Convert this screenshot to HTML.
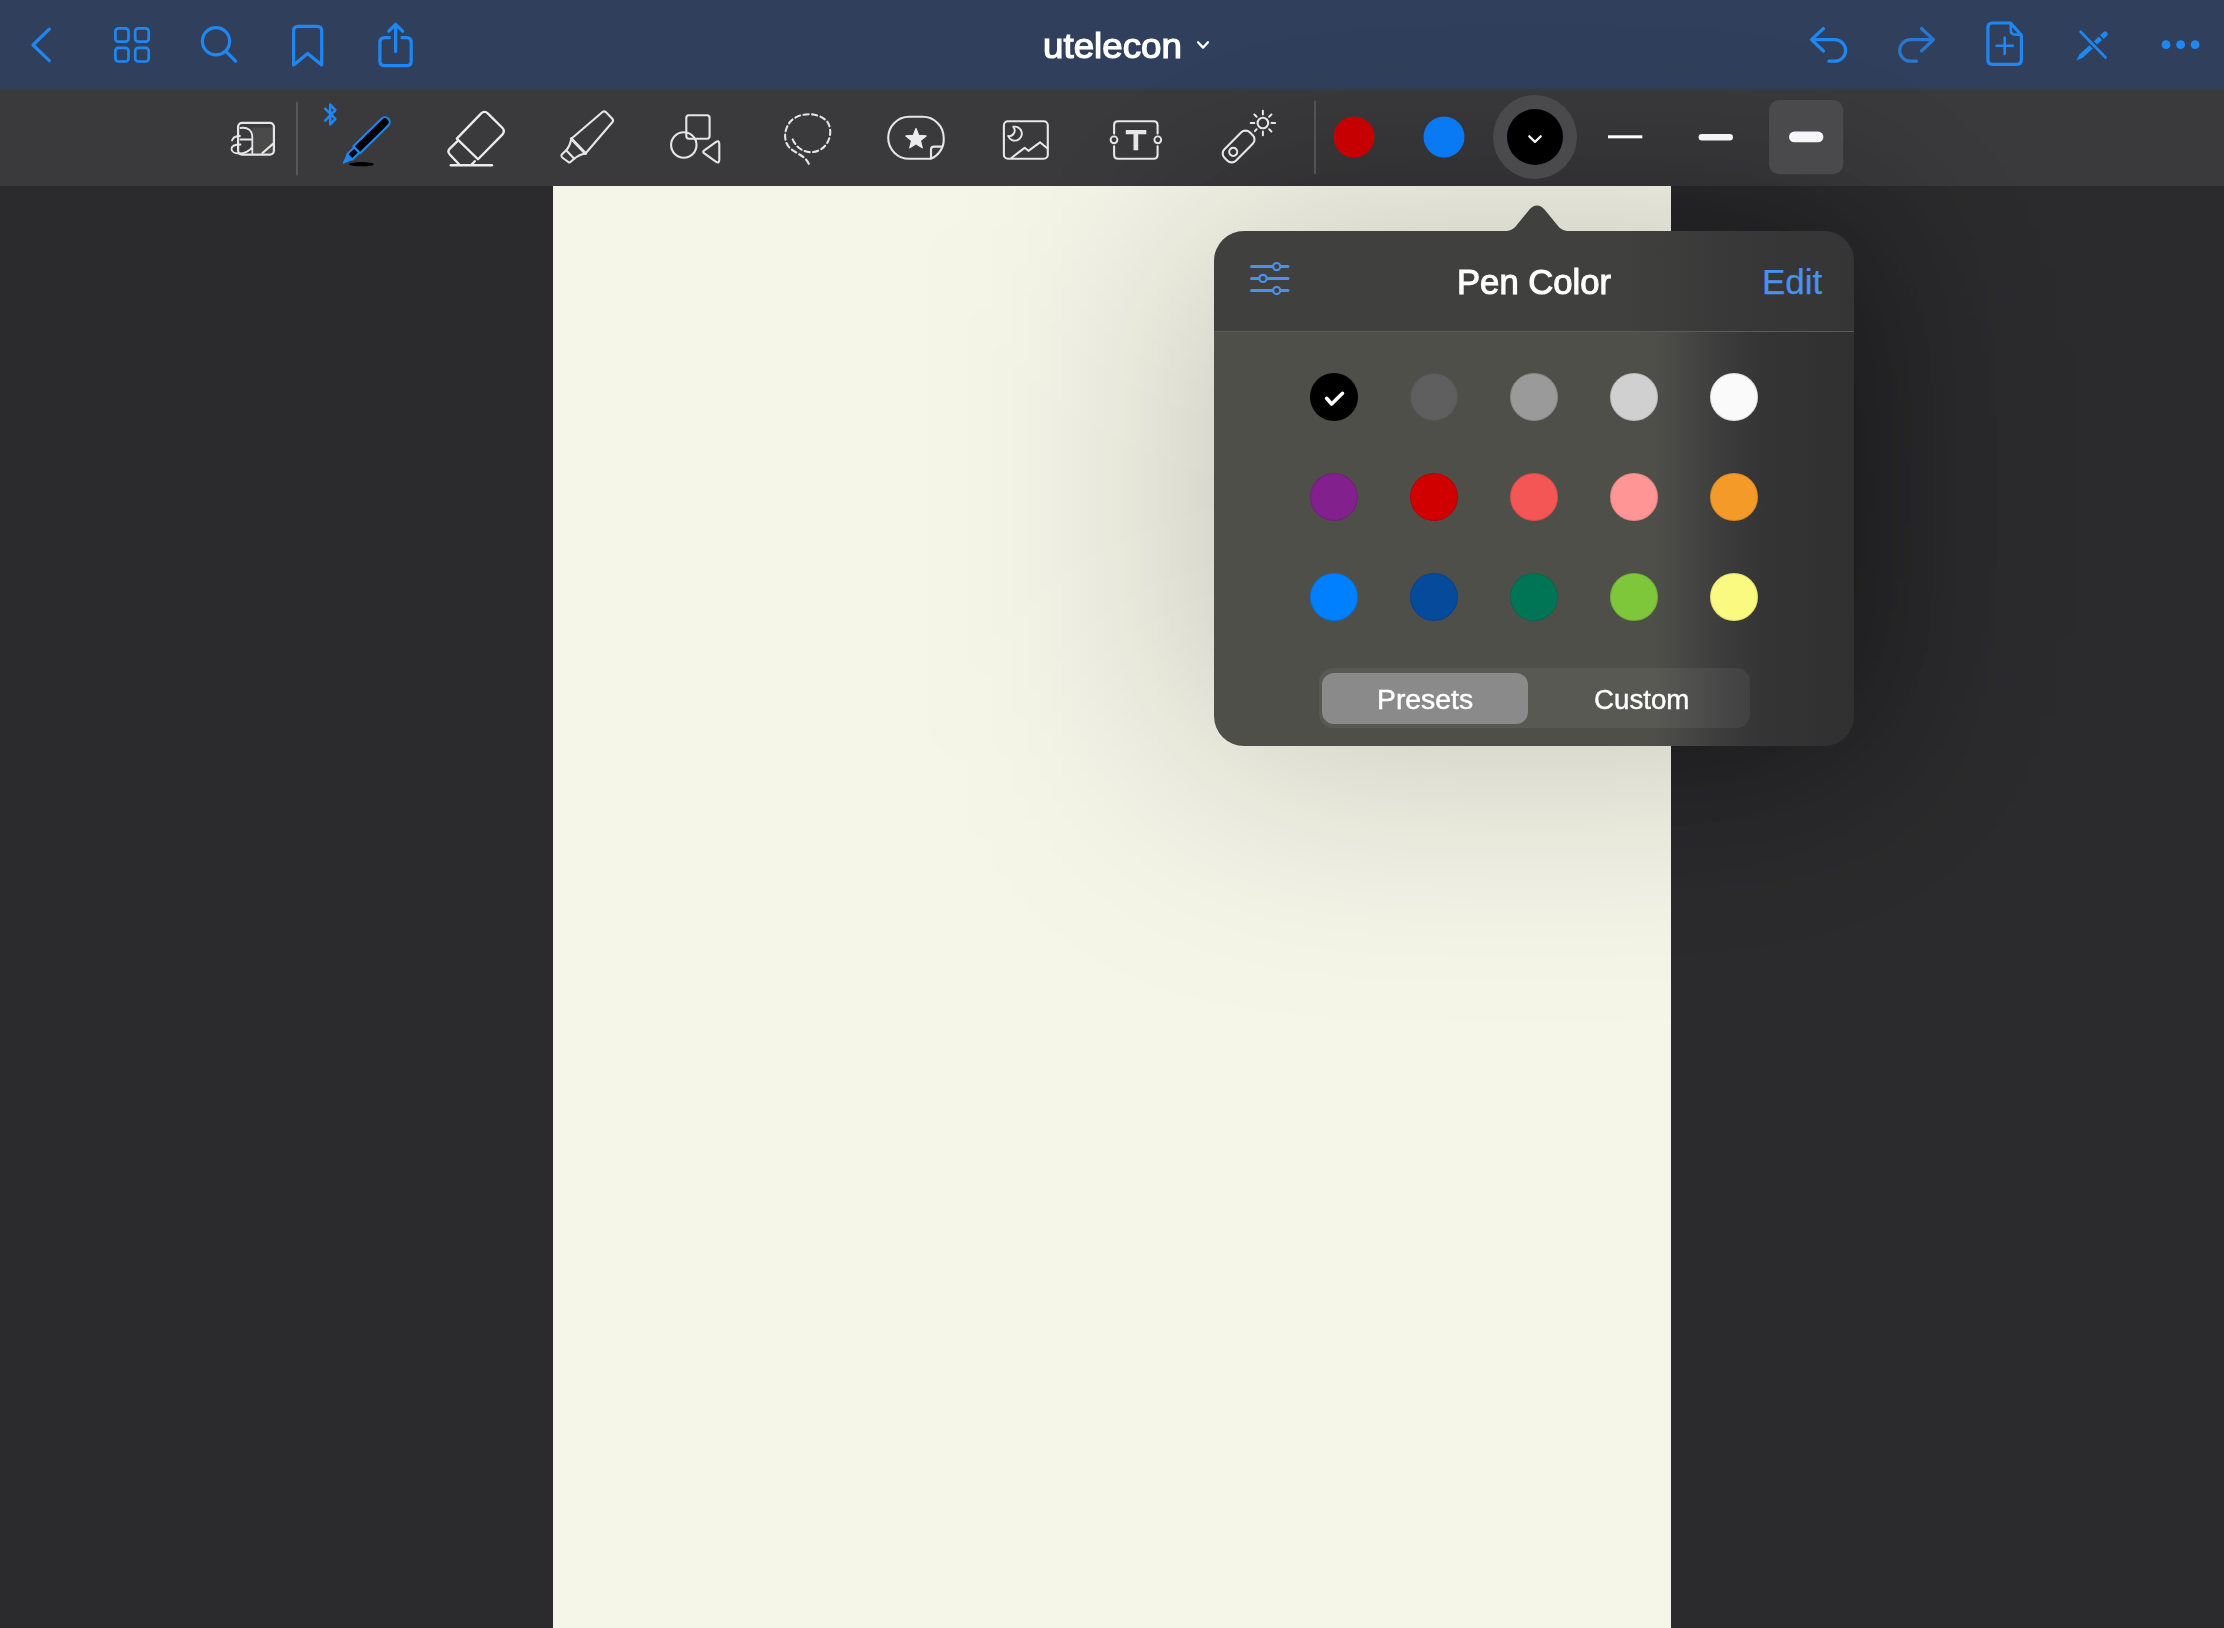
<!DOCTYPE html>
<html><head><meta charset="utf-8">
<style>
*{margin:0;padding:0;box-sizing:border-box}
html,body{width:2224px;height:1628px;overflow:hidden;background:#2b2b2d;font-family:"Liberation Sans",sans-serif}
#nav{position:absolute;left:0;top:0;width:2224px;height:92px;background:linear-gradient(180deg,#30405c 0px,#30405c 87px,#363b48 89.5px,#3a3a3c 92px)}
#tb{position:absolute;left:0;top:92px;width:2224px;height:94px;background:#3a3a3c}
#paper{position:absolute;left:553px;top:186px;width:1118px;height:1442px;background:#f5f5e8;overflow:hidden}
#shadow{position:absolute;left:0;top:0;width:2224px;height:1628px;overflow:hidden;pointer-events:none}
#pop{position:absolute;left:1214px;top:231px;width:640px;height:515px;border-radius:30px;overflow:hidden}
#pophead{position:absolute;left:0;top:0;width:640px;height:100px;background:linear-gradient(90deg,#40403e 0%,#40403e 64%,#373738 84%,#353536 100%)}
#popsep{position:absolute;left:0;top:100px;width:640px;height:1px;background:#5a5a58}
#popbody{position:absolute;left:0;top:101px;width:640px;height:414px;background:linear-gradient(90deg,#4f4f4a 0%,#4f4f4a 68%,#4b4b48 71%,#444443 75%,#3b3b3b 80%,#343435 86%,#303031 100%)}

.t{position:absolute;white-space:nowrap;line-height:1}
.sw{position:absolute;width:48px;height:48px;border-radius:50%;box-shadow:inset 0 0 0 1px rgba(0,0,0,0.10)}
svg{position:absolute;overflow:visible}
</style></head><body>
<div id="nav"></div>
<div id="tb"></div>
<div id="paper"></div>
<svg id="popshadow" width="2224" height="1628" style="position:absolute;left:0;top:0"><defs><filter id="sh" x="-200%" y="-200%" width="500%" height="500%"><feGaussianBlur stdDeviation="125"/></filter></defs><rect x="1189" y="221" width="690" height="540" rx="40" fill="#000" fill-opacity="0.2" filter="url(#sh)"/><defs><clipPath id="rc"><rect x="1671" y="186" width="553" height="1442"/><rect x="0" y="92" width="2224" height="94"/></clipPath></defs><g clip-path="url(#rc)"><rect x="1214" y="231" width="640" height="515" rx="30" fill="#000" fill-opacity="0.36" filter="url(#sh2)"/></g><defs><filter id="sh2" x="-100%" y="-100%" width="300%" height="300%"><feGaussianBlur stdDeviation="85"/></filter></defs></svg>
<div id="pop">
  <div id="pophead"></div>
  <div id="popsep"></div>
  <div id="popbody"></div>
</div>
<svg id="arrow" width="2224" height="1628" style="position:absolute;left:0;top:0"><path d="M1500 231.5 C1509 231.5 1512.5 230 1516 226 L1529.5 209.5 C1534 204 1540 204 1544.5 209.5 L1558 226 C1561.5 230 1565 231.5 1574 231.5 Z" fill="#40403e"/></svg>

<div class="t" style="left:1042.5px;top:27.5px;font-size:35px;color:#fff;-webkit-text-stroke:1.2px #fff;transform:scaleX(1.05);transform-origin:0 0">utelecon</div>
<div class="t" style="left:1457px;top:264px;font-size:35px;color:#fff;-webkit-text-stroke:1.1px #fff;transform:scaleX(0.99);transform-origin:0 0">Pen Color</div>
<div class="t" style="left:1762px;top:264px;font-size:35px;color:#4a90f0;-webkit-text-stroke:0.25px #4a90f0">Edit</div>

<div class="sw" style="left:1310px;top:373px;background:#000"></div>
<div class="sw" style="left:1410px;top:373px;background:#5f5f5f"></div>
<div class="sw" style="left:1510px;top:373px;background:#9a9a9a"></div>
<div class="sw" style="left:1610px;top:373px;background:#d0d0d0"></div>
<div class="sw" style="left:1710px;top:373px;background:#fafafa"></div>
<div class="sw" style="left:1310px;top:473px;background:#82208e"></div>
<div class="sw" style="left:1410px;top:473px;background:#d00000"></div>
<div class="sw" style="left:1510px;top:473px;background:#f45555"></div>
<div class="sw" style="left:1610px;top:473px;background:#ff9595"></div>
<div class="sw" style="left:1710px;top:473px;background:#f39a28"></div>
<div class="sw" style="left:1310px;top:573px;background:#0080ff"></div>
<div class="sw" style="left:1410px;top:573px;background:#064a9c"></div>
<div class="sw" style="left:1510px;top:573px;background:#007556"></div>
<div class="sw" style="left:1610px;top:573px;background:#7ec73b"></div>
<div class="sw" style="left:1710px;top:573px;background:#fafa80"></div>

<div style="position:absolute;left:1319px;top:668px;width:431px;height:60px;border-radius:14px;background:rgba(255,255,255,0.06)"></div>
<div style="position:absolute;left:1322px;top:673px;width:206px;height:51px;border-radius:12px;background:#8a8a8b"></div>
<div class="t" style="left:1377px;top:686.5px;font-size:27px;color:#fff;-webkit-text-stroke:0.45px #fff;transform:scaleX(1.05);transform-origin:0 0">Presets</div>
<div class="t" style="left:1594px;top:686.5px;font-size:27px;color:#fff;-webkit-text-stroke:0.4px #fff;transform:scaleX(1.025);transform-origin:0 0">Custom</div>
<svg id="ic" width="2224" height="1628" viewBox="0 0 2224 1628" style="position:absolute;left:0;top:0" fill="none" stroke-linecap="round" stroke-linejoin="round">
<!-- NAV (blue) -->
<g stroke="#1f87f2" stroke-width="3.2">
  <path d="M49.3 29.2 L33 45 L49.3 60.6"/>
  <g stroke-width="2.7"><rect x="115.4" y="28.3" width="13.1" height="13.4" rx="3"/>
  <rect x="135.2" y="28.3" width="13.5" height="13.4" rx="3"/>
  <rect x="115.4" y="47.8" width="13.1" height="13.7" rx="3"/>
  <rect x="135.2" y="47.8" width="13.5" height="13.7" rx="3"/></g>
  <circle cx="216" cy="41.2" r="13.6"/>
  <path d="M226 51.5 L235.6 61.2"/>
  <path d="M293.6 65 V31 Q293.6 26.3 298.3 26.3 H317 Q321.7 26.3 321.7 31 V65 L307.7 53.5 Z"/>
  <path d="M389.5 37.6 H384.8 Q379.9 37.6 379.9 42.5 V61 Q379.9 65.7 384.8 65.7 H406.4 Q411.2 65.7 411.2 61 V42.5 Q411.2 37.6 406.4 37.6 H402"/>
  <path d="M395.6 51.5 V24.5 M388.8 31.2 L395.6 24.3 L402.6 31.2"/>
  <path d="M1823.5 28.5 L1811.5 39.6 L1823.5 51 M1811.5 39.6 H1834.8 A10.8 10.8 0 0 1 1834.8 61.2 H1829"/>
  <path d="M1996.6 45.8 H2012.8 M2004.7 37.8 V54" stroke-width="2.6"/>
  <path d="M2010.5 23 H1992.5 Q1987.9 23 1987.9 27.6 V59.8 Q1987.9 64.4 1992.5 64.4 H2016.8 Q2021.4 64.4 2021.4 59.8 V35.2 L2010.5 23 Z"/>
  <path d="M2010.8 23.5 V30 Q2010.8 34.6 2015.4 34.6 H2021" stroke-width="2.6"/>

</g>
<g stroke="#2a76cf" stroke-width="3.2"><path d="M1921.5 28.5 L1933.5 39.6 L1921.5 51 M1933.5 39.6 H1910.5 A10.8 10.8 0 0 0 1910.5 61.2 H1916.5"/></g>
<g fill="#1f87f2">
  <g transform="translate(2076.4 60.4) rotate(-42.6)"><path d="M0 0 L6.5 -2.3 H32.8 V2.3 H6.5 Z"/><path d="M34.6 -2.6 H38.9 A2.6 2.6 0 0 1 38.9 2.6 H34.6 Z"/></g>
  <path d="M2080.6 31.8 L2105.4 57.4" stroke="#30405c" stroke-width="6.2" stroke-linecap="butt"/>
  <path d="M2080.6 31.8 L2105.4 57.4" stroke="#1f87f2" stroke-width="2.8" stroke-linecap="round"/>
  <circle cx="2166" cy="44.7" r="4.4"/><circle cx="2180.6" cy="44.7" r="4.4"/><circle cx="2195.1" cy="44.7" r="4.4"/>
</g>

<!-- TOOLBAR (white) -->
<rect x="252.4" y="127.4" width="20.4" height="25.8" fill="#4a4a4b"/>
<g stroke="#e6e6e6" stroke-width="2.2">
  <rect x="238.1" y="122.8" width="35.8" height="31.8" rx="4"/>
  <path d="M262.5 153 L273 143.8"/>
  <path d="M240.5 128 C247.5 126.8 252.3 130 252.3 137.5 V153.5 M240.5 139.5 H252.3 M252.3 147 C249 151.5 244 153.5 239 153.5 C234.5 153.5 231.5 151.5 231.5 149 C231.5 146 234.5 144.5 240.5 144.5 M232 140.5 C232.8 137.5 235.5 136 240 136" stroke-width="1.8"/>
</g>
<path d="M297 102.5 V174.5" stroke="#58585a" stroke-width="2"/>
<path d="M325.2 108.6 L335.4 118.8 L330.2 124.5 V104.6 L335.4 110.2 L325.2 120.6" stroke="#1f87f2" stroke-width="2.5"/>
<ellipse cx="361.5" cy="164.2" rx="12.5" ry="2.1" fill="#000"/>
<g transform="translate(343.3 163.2) rotate(-44.5)">
  <path d="M0.5 0 L9 -3.4 L9 3.4 Z" fill="#1f87f2" stroke="#1f87f2" stroke-width="1.6"/>
  <rect x="9" y="-3.6" width="10" height="7.2" fill="#000" stroke="#1f87f2" stroke-width="2"/>
  <path d="M19 -5 H58.5 A4.6 4.6 0 0 1 58.5 4.6 H19 Z" fill="#000" stroke="#1f87f2" stroke-width="2.1"/>
</g>
<g stroke="#ececec" stroke-width="2.3">
  <path d="M456.8 138.6 L481 113.6 Q484.5 110.2 488 113.6 L502.3 127.8 Q505.5 131.2 502.3 134.6 L478 159.3 Z"/>
  <path d="M457.5 141.2 L449.8 148.6 Q447 151.5 449.8 154.5 L458.8 164 M474.8 161.2 L471.6 164.6"/>
  <path d="M450.8 165.3 H492" stroke-width="2.4"/>
</g>
<g stroke="#e6e6e6" stroke-width="2.1">
  <path d="M571.3 138.8 L602.5 112 Q604.3 110.6 606 112.3 L612.3 118.7 Q613.8 120.3 612.5 122 L585.5 153.5"/>
  <path d="M571.3 138.8 Q570 146 566.2 150.3 L574.2 158.8 Q578.5 154.8 585.5 153.5 Z"/>
  <path d="M571.3 138.8 L585.5 153.5" stroke-width="3"/>
  <path d="M566.2 150.3 L561.6 154.8 Q560.8 156.3 562.2 157.5 L568.3 162 Q569.6 162.8 570.7 161.8 L574.2 158.8"/>
  <rect x="686.3" y="115.3" width="23.3" height="23.4" rx="2.6"/>
  <circle cx="683.8" cy="145" r="12.7"/>
  <path d="M704.3 150.4 L715.8 142.2 Q719.3 139.8 719.3 144 V159.8 Q719.3 164 715.8 161.6 L704.3 153.4 Q702.2 151.9 704.3 150.4 Z"/>
  <path d="M808.8 163.8 C806 157 798 154 791.5 149.5 C783.5 143.5 783 131 790 122 C797.5 112.5 818 111 827 121.5 C833 129 831 145 818.5 150.5 C808 155 797 150 792.5 139" stroke-dasharray="5.2 3.4"/>
  <path d="M930.8 158.8 H909.2 A21 21 0 0 1 888.2 137.8 A21 21 0 0 1 909.2 116.8 H922.7 A21 21 0 0 1 943.7 137.8 A21 21 0 0 1 930.8 158.8 M942.2 146.6 H934 Q931 146.6 931 149.6 V158.5"/>
  <rect x="1003.9" y="121.2" width="43.9" height="37.5" rx="4"/>
  <path d="M1011.4 158 L1024.6 147.8 L1028.4 150.8 L1040 142.3 L1047.5 148.5"/>
  <path d="M1013.3 126.8 A7 7 0 1 1 1008.2 136 A5.6 5.6 0 0 0 1013.3 126.8 Z" stroke-width="1.9"/>
  <path d="M1114.1 133.6 V125.2 Q1114.1 121.2 1118.1 121.2 H1153.6 Q1157.6 121.2 1157.6 125.2 V133.6 M1114.1 146.2 V154.7 Q1114.1 158.7 1118.1 158.7 H1153.6 Q1157.6 158.7 1157.6 154.7 V146.2"/>
  <circle cx="1114" cy="139.8" r="3.4" stroke-width="1.9"/>
  <circle cx="1157.8" cy="139.8" r="3.4" stroke-width="1.9"/>
  <g transform="translate(1238.6 146.5) rotate(-45)"><rect x="-17.9" y="-8.1" width="35.8" height="16.2" rx="6"/><circle cx="-7.6" cy="0" r="4"/></g>
  <circle cx="1262.9" cy="123" r="5.3"/>
  <path d="M1262.9 110.8 V114.4 M1262.9 131.6 V135.2 M1250.7 123 H1254.3 M1271.5 123 H1275.1 M1254.4 114.5 L1256.6 116.7 M1269.2 129.3 L1271.4 131.5 M1271.4 114.5 L1269.2 116.7 M1256.6 129.3 L1254.8 131.1" stroke-width="2"/>
</g>
<path d="M916.0 128.6 L918.7 135.5 L926.1 135.9 L920.4 140.6 L922.2 147.8 L916.0 143.8 L909.8 147.8 L911.6 140.6 L905.9 135.9 L913.3 135.5 Z" fill="#ececec" stroke="#ececec" stroke-width="1.3" stroke-linejoin="round"/>
<path d="M1125.8 129.9 H1146.3 V134.3 H1138.2 V150.2 H1133.5 V134.3 H1125.8 Z" fill="#e6e6e6"/>
<path d="M1315 101.5 V173" stroke="#535355" stroke-width="2"/>
<circle cx="1354" cy="137" r="20.5" fill="#c60000"/>
<circle cx="1444" cy="137" r="20.5" fill="#0a7af3"/>
<circle cx="1535" cy="137" r="42" fill="#4a4a4c"/>
<circle cx="1535" cy="137" r="28" fill="#000"/>
<path d="M1529.3 136.3 L1535 141.8 L1540.7 136.3" stroke="#f2f2f2" stroke-width="2.3"/>
<rect x="1608" y="135.3" width="34.3" height="3" fill="#fff"/>
<rect x="1698.6" y="134" width="34.4" height="6.5" rx="3.2" fill="#f4f4f4"/>
<rect x="1769" y="100" width="74.2" height="74.2" rx="10" fill="#4a4a4c"/>
<rect x="1789" y="131.6" width="34.4" height="10.6" rx="5.3" fill="#f6f6f6"/>
<path d="M1198 42.3 L1203 47.6 L1208 42.3" stroke="#fff" stroke-width="2.3"/>
<path d="M1251.5 266.6 H1288 M1251.5 278.4 H1288 M1251.5 290.5 H1288" stroke="#4a90f0" stroke-width="3"/>
<circle cx="1276.7" cy="266.6" r="3.6" fill="#40403e" stroke="#4a90f0" stroke-width="2.2"/>
<circle cx="1263" cy="278.4" r="3.6" fill="#40403e" stroke="#4a90f0" stroke-width="2.2"/>
<circle cx="1276.7" cy="290.5" r="3.6" fill="#40403e" stroke="#4a90f0" stroke-width="2.2"/>
<path d="M1326.6 398.3 L1331.6 404 L1342.5 393.3" stroke="#fff" stroke-width="3.6"/>
</svg>
</body></html>
